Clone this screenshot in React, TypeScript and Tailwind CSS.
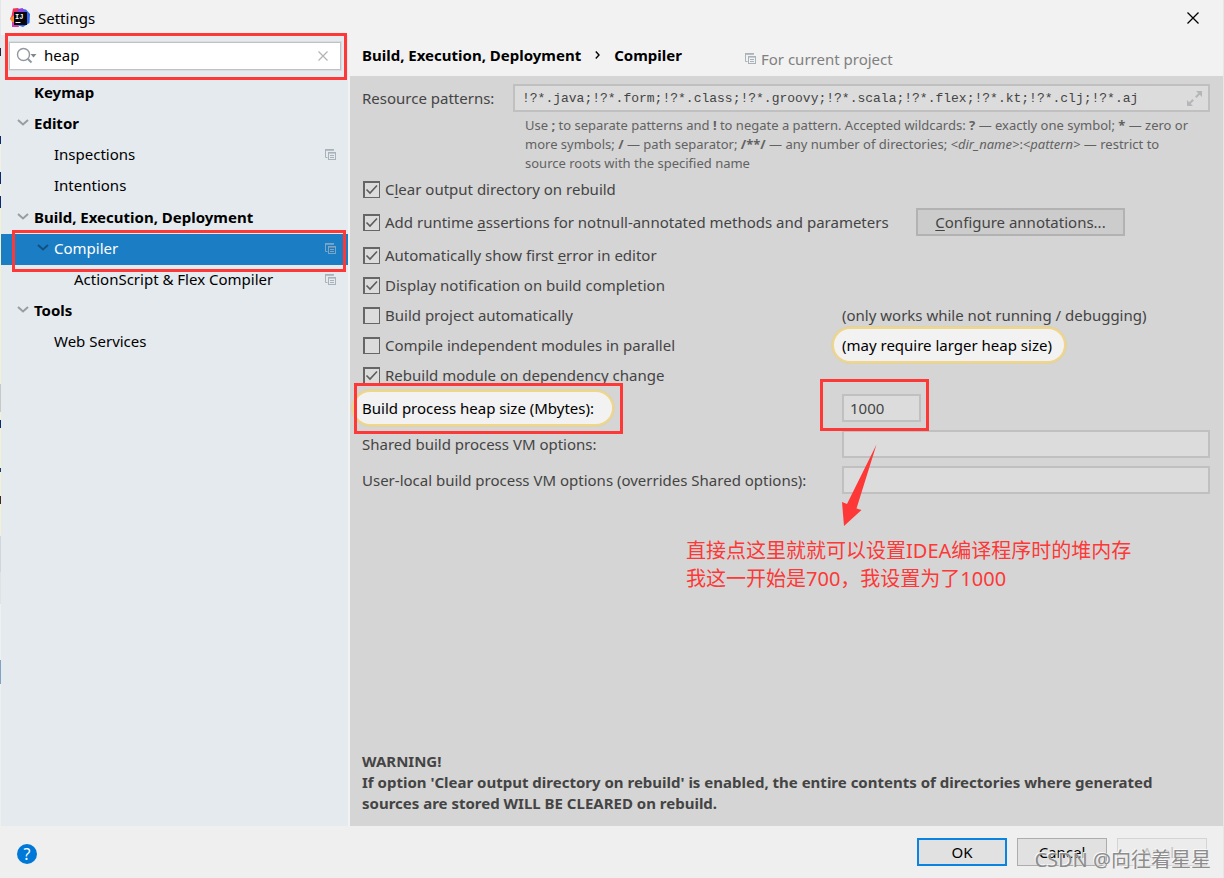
import React, { useState } from "react";

const edgeSegments: [string, string][] = [
  ["h-12", "bg-[#e4e6ea]"],
  ["h-2", "bg-[#3a1a3c]"],
  ["h-20", "bg-[#e9e9e6]"],
  ["h-2", "bg-[#0b2a70]"],
  ["h-7", "bg-[#f0f0e4]"],
  ["h-3", "bg-[#0b2a70]"],
  ["h-3", "bg-[#f0f0e4]"],
  ["h-3", "bg-[#0b2a70]"],
  ["h-44", "bg-[#f2f1d2]"],
  ["h-7", "bg-[#c8c8c8]"],
  ["h-2", "bg-[#f2f1d2]"],
  ["h-2", "bg-[#0b2a70]"],
  ["h-10", "bg-[#f2f1d2]"],
  ["h-1", "bg-[#203a60]"],
  ["h-6", "bg-[#f2f1d2]"],
  ["h-2", "bg-[#402a20]"],
  ["h-8", "bg-[#f2f1d2]"],
  ["h-9", "bg-[#d2d5d9]"],
  ["h-8", "bg-[#e2e2e2]"],
  ["h-14", "bg-[#f0f0f0]"],
  ["h-6", "bg-[#7fa3c4]"],
];

function Logo() {
  return (
    <svg viewBox="0 0 20 20" className="h-5 w-5" aria-hidden="true">
      <path d="M3 0.5 L8 0 L12 4 L4 14 L0 11 L1.5 8 Z" fill="#f0325c" />
      <path d="M0 10 L5 7 L6 16 L3 16 Z" fill="#f98a2c" />
      <path d="M2 14 L8 15 L9 19 L2 19 Z" fill="#d03fb4" />
      <path d="M12 1 L16 1.5 L20 6 L19.5 15 L13 19 L7 17 Z" fill="#2f6bf0" />
      <path d="M8 1 L12.5 0 L15 3 L12 6 L7 4 Z" fill="#8b45d8" />
      <rect x="4" y="4" width="13" height="13" fill="#08080c" />
      <text x="5" y="10.5" fill="#fff" fontSize="7" fontWeight="700" fontFamily="Liberation Mono, monospace">
        IJ
      </text>
      <rect x="5.5" y="14" width="5" height="1" fill="#fff" />
    </svg>
  );
}

function CopyIcon({ tone = "text-[#aab2b9]" }: { tone?: string }) {
  return (
    <svg viewBox="0 0 11 11" className={"h-[11px] w-[11px] shrink-0 " + tone} fill="none" stroke="currentColor" aria-hidden="true">
      <path d="M8.5 1 H0.5 V8.5 H2.5" />
      <path d="M0 0.8 H9" strokeWidth="1.6" />
      <rect x="3.5" y="3.5" width="7" height="7" />
      <path d="M3 3.8 H11" strokeWidth="1.6" />
      <path d="M5 6.5 H9 M5 8.5 H9" />
    </svg>
  );
}

function Chevron({ dark }: { dark?: boolean }) {
  return (
    <svg viewBox="0 0 12 8" className={"h-2 w-3 shrink-0 " + (dark ? "text-[#12507f]" : "text-[#999d9f]")} fill="none" stroke="currentColor" strokeWidth="2" aria-hidden="true">
      <path d="M1 1 L6 5.5 L11 1" />
    </svg>
  );
}

function Frame({ place }: { place: string }) {
  return <span aria-hidden="true" className={"pointer-events-none absolute z-10 border-3 border-[#fd3837] " + place} />;
}

type Item = {
  label: string;
  pad: string;
  bold?: boolean;
  open?: boolean;
  copy?: boolean;
  selected?: boolean;
  gap?: boolean;
};

const items: Item[] = [
  { label: "Keymap", pad: "pl-[33px]", bold: true },
  { label: "Editor", pad: "pl-4", bold: true, open: true },
  { label: "Inspections", pad: "pl-[53px]", copy: true },
  { label: "Intentions", pad: "pl-[53px]" },
  { label: "Build, Execution, Deployment", pad: "pl-4", bold: true, open: true, gap: true },
  { label: "Compiler", pad: "pl-9", open: true, copy: true, selected: true },
  { label: "ActionScript & Flex Compiler", pad: "pl-[73px]", copy: true },
  { label: "Tools", pad: "pl-4", bold: true, open: true },
  { label: "Web Services", pad: "pl-[53px]" },
];

function Sidebar() {
  const [query, setQuery] = useState("heap");
  return (
    <aside className="w-[347px] shrink-0 bg-[#e5eaee]">
      <div className="relative mt-[7px] mr-[7px] mb-2 ml-2 flex h-7 items-center border border-[#bfc3c6] bg-white pr-3 pl-1.5 outline outline-[#dadddf]">
        <svg viewBox="0 0 22 18" className="h-[18px] w-[22px] shrink-0" fill="none" stroke="#9299a0" aria-hidden="true">
          <circle cx="7.5" cy="7.5" r="6" strokeWidth="1.4" />
          <path d="M11.7 11.7 L15.5 15.5" strokeWidth="2" />
          <path d="M14.5 7 H20.5 L17.5 10.5 Z" fill="#80878d" stroke="none" />
        </svg>
        <input
          aria-label="Search settings"
          value={query}
          onChange={(e) => setQuery(e.target.value)}
          className="ml-1.5 min-w-0 flex-1 bg-transparent pb-0.5 text-[15px] text-black outline-none"
        />
        <button aria-label="Clear search" onClick={() => setQuery("")}>
          <svg viewBox="0 0 10 10" className="h-2.5 w-2.5" stroke="#b3b3b3" strokeWidth="1.2" aria-hidden="true">
            <path d="M0.5 0.5 L9.5 9.5 M9.5 0.5 L0.5 9.5" />
          </svg>
        </button>
        <Frame place="-top-[10px] -right-[7px] -bottom-[11px] -left-[5px]" />
      </div>
      <ul>
        {items.map((it) => (
          <li key={it.label} className={"relative " + (it.gap ? "mt-px" : "")}>
            <button
              className={
                "flex h-[31px] w-full items-center gap-[5px] pr-3 pb-[3px] text-left " +
                it.pad +
                (it.bold ? " font-bold" : "") +
                (it.selected ? " bg-[#1b7dc4] text-white" : " text-black")
              }
            >
              {it.open && <Chevron dark={it.selected} />}
              <span className="flex-1 whitespace-nowrap">{it.label}</span>
              {it.copy && <CopyIcon tone={it.selected ? "text-[#7fa5c3]" : "text-[#aab2b9]"} />}
            </button>
            {it.selected && <Frame place="-top-1 right-0.5 -bottom-[7px] left-[11px]" />}
          </li>
        ))}
      </ul>
    </aside>
  );
}

function Check({ id, checked, children }: { id: string; checked?: boolean; children: React.ReactNode }) {
  return (
    <div className="flex items-center gap-[5px] pl-px">
      <span className="relative flex h-[17px] w-[17px]">
        <input
          id={id}
          type="checkbox"
          defaultChecked={checked}
          className="peer h-[17px] w-[17px] appearance-none border-2 border-r border-b border-[#666666] bg-[#dcdcdc]"
        />
        <svg viewBox="0 0 17 17" className="pointer-events-none absolute inset-0 hidden h-[17px] w-[17px] peer-checked:block" fill="none" stroke="#5c5c5c" strokeWidth="1.6" aria-hidden="true">
          <path d="M3.5 8.5 L7 12 L14 4.5" />
        </svg>
      </span>
      <label htmlFor={id} className="whitespace-nowrap">
        {children}
      </label>
    </div>
  );
}

const K = ({ children }: { children: React.ReactNode }) => <span className="underline underline-offset-2">{children}</span>;
const pill = "relative z-[1] -ml-2.5 rounded-full border-2 border-[#efd68a] bg-[#f2f2f2] py-1 pr-3 pl-2 whitespace-nowrap text-black outline outline-[#e0d3a6]";
const field = "h-7 border-2 border-[#c0c0c0] bg-[#dcdcdc] px-1.5 text-[#444444] outline-none";

function Content() {
  return (
    <main className="flex min-w-0 flex-1 flex-col">
      <h1 className="flex h-[41px] items-center gap-3.5 pb-0.5 pl-3 font-bold whitespace-nowrap text-black">
        <span>Build, Execution, Deployment</span>
        <svg viewBox="0 0 5 8" className="h-2 w-[5px]" fill="none" stroke="#000" strokeWidth="1.4" aria-hidden="true">
          <path d="M0.8 0.5 L4 4 L0.8 7.5" />
        </svg>
        <span>Compiler</span>
        <span className="ml-[49px] flex items-center gap-[5px] pt-2 font-normal text-[#808080]">
          <CopyIcon />
          For current project
        </span>
      </h1>
      <div className="relative flex flex-1 flex-col bg-[#d5d5d5] pt-2 pr-[13px] pb-3 pl-3 text-[#444444]">
        <div className="flex items-center">
          <label htmlFor="patterns" className="w-[151px] shrink-0 whitespace-nowrap">
            Resource patterns:
          </label>
          <div className="flex h-7 flex-1 items-center border-2 border-[#c0c0c0] bg-[#dcdcdc] pr-1.5 pl-[7px]">
            <input
              id="patterns"
              defaultValue="!?*.java;!?*.form;!?*.class;!?*.groovy;!?*.scala;!?*.flex;!?*.kt;!?*.clj;!?*.aj"
              className="min-w-0 flex-1 bg-transparent pt-0.5 font-['Liberation_Mono',monospace] text-[13px] outline-none"
            />
            <button aria-label="Expand">
              <svg viewBox="0 0 15 15" className="h-[15px] w-[15px]" fill="#b4b7b9" stroke="#b4b7b9" aria-hidden="true">
                <path d="M9 0 H15 V6 Z M0 9 V15 H6 Z" stroke="none" />
                <path d="M12.5 2.5 L8.8 6.2 M2.5 12.5 L6.2 8.8" strokeWidth="2" />
              </svg>
            </button>
          </div>
        </div>
        <p className="mt-1 ml-[163px] text-[13px] leading-[19px] whitespace-nowrap text-[#626262]">
          Use <b>;</b> to separate patterns and <b>!</b> to negate a pattern. Accepted wildcards: <b>?</b> — exactly one symbol; <b>*</b> — zero or
          <br />
          more symbols; <b>/</b> — path separator; <b>/**/</b> — any number of directories; <i>&lt;dir_name&gt;</i>:<i>&lt;pattern&gt;</i> — restrict to
          <br />
          source roots with the specified name
        </p>
        <div className="mt-px grid grid-cols-[480px_1fr] grid-rows-[30px_36px_30px_30px_30px_30px_30px_36px_36px_36px] items-center">
          <div className="col-span-2">
            <Check id="clear" checked>
              C<K>l</K>ear output directory on rebuild
            </Check>
          </div>
          <div className="col-span-2 flex items-center">
            <div className="min-w-[554px]">
              <Check id="assert" checked>
                Add runtime <K>a</K>ssertions for notnull-annotated methods and parameters
              </Check>
            </div>
            <button className="h-7 w-[209px] border-2 border-[#b2b2b2] bg-[#cccccc] leading-6 whitespace-nowrap">
              <K>C</K>onfigure annotations...
            </button>
          </div>
          <div className="col-span-2">
            <Check id="first" checked>
              Automatically show first <K>e</K>rror in editor
            </Check>
          </div>
          <div className="col-span-2">
            <Check id="notify" checked>
              Display notification on build completion
            </Check>
          </div>
          <Check id="auto">Build project automatically</Check>
          <span className="whitespace-nowrap">(only works while not running / debugging)</span>
          <Check id="parallel">Compile independent modules in parallel</Check>
          <div className="flex">
            <span className={pill}>(may require larger heap size)</span>
          </div>
          <div className="col-span-2">
            <Check id="rebuild" checked>
              Rebuild module on dependency change
            </Check>
          </div>
          <div className="relative flex w-[252px]">
            <label htmlFor="heap" className={pill + " flex-1"}>
              Build process heap size (Mbytes):
            </label>
            <Frame place="-top-[7px] -right-[9px] -bottom-2 -left-2" />
          </div>
          <div className="relative flex w-fit">
            <input id="heap" defaultValue="1000" className={field + " w-[79px]"} />
            <Frame place="-top-[15px] -right-2 -bottom-[9px] -left-[22px]" />
          </div>
          <label htmlFor="shared" className="whitespace-nowrap">
            Shared build process VM options:
          </label>
          <input id="shared" className={field} />
          <label htmlFor="local" className="whitespace-nowrap">
            User-local build process VM options (overrides Shared options):
          </label>
          <input id="local" className={field} />
        </div>
        <div className="pointer-events-none absolute top-[368px] left-[336px] text-xl leading-7 whitespace-nowrap text-[#fd3837]">
          <svg viewBox="0 0 36 82" className="ml-[155px] h-[82px] w-9" fill="#fd3837" aria-hidden="true">
            <path d="M35.5 0.5 L15.5 64.5 L20.5 66 L3 82 L1 58 L6 60 Z" />
          </svg>
          <p className="mt-[11px]">直接点这里就就可以设置IDEA编译程序时的堆内存</p>
          <p>我这一开始是700，我设置为了1000</p>
        </div>
        <div className="mt-auto leading-[21px] font-bold">
          <p>WARNING!</p>
          <p>
            If option 'Clear output directory on rebuild' is enabled, the entire contents of directories where generated
            <br />
            sources are stored WILL BE CLEARED on rebuild.
          </p>
        </div>
      </div>
    </main>
  );
}

export default function App() {
  return (
    <div className="flex min-h-screen overflow-hidden bg-[#f2f2f2] font-['Noto_Sans','Noto_Sans_CJK_SC',sans-serif] text-[15px] leading-6">
      <div aria-hidden="true" className="w-px shrink-0 bg-[#efefef]">
        {edgeSegments.map(([h, c], i) => (
          <div key={i} className={h + " " + c} />
        ))}
      </div>
      <div className="flex min-w-0 flex-1 flex-col">
        <header className="flex h-[35px] items-center gap-2 pr-6 pl-[9px] text-black">
          <Logo />
          <span className="flex-1">Settings</span>
          <button aria-label="Close">
            <svg viewBox="0 0 12 12" className="h-3 w-3" stroke="#000" strokeWidth="1.3" aria-hidden="true">
              <path d="M0.5 0.5 L11.5 11.5 M11.5 0.5 L0.5 11.5" />
            </svg>
          </button>
        </header>
        <div className="flex flex-1 gap-0.5">
          <Sidebar />
          <Content />
        </div>
        <footer className="relative flex h-[52px] items-center justify-between bg-[#efefef] pr-4 pl-4 text-black">
          <button aria-label="Help" className="mt-1 h-5 w-5 rounded-full bg-[#0078d7] text-base leading-5 text-white">
            ?
          </button>
          <div className="flex gap-2.5">
            <button className="h-7 w-[90px] border-2 border-[#0a84e0] bg-[#e1e1e1] leading-6">OK</button>
            <button className="h-7 w-[90px] border border-[#adadad] bg-[#e1e1e1] leading-6">Cancel</button>
            <button disabled className="h-7 w-[90px] border border-[#d4d4d4] bg-[#ececec] leading-6 text-[#c4c4c4]">
              Apply
            </button>
          </div>
          <span className="pointer-events-none absolute right-3 bottom-1 text-xl leading-7 whitespace-nowrap text-[#8c8c8c] [text-shadow:-1px_-1px_0_#f8f8f8]">
            CSDN @向往着星星
          </span>
        </footer>
      </div>
      <div aria-hidden="true" className="w-px shrink-0 bg-[#e4e6e8]" />
    </div>
  );
}
